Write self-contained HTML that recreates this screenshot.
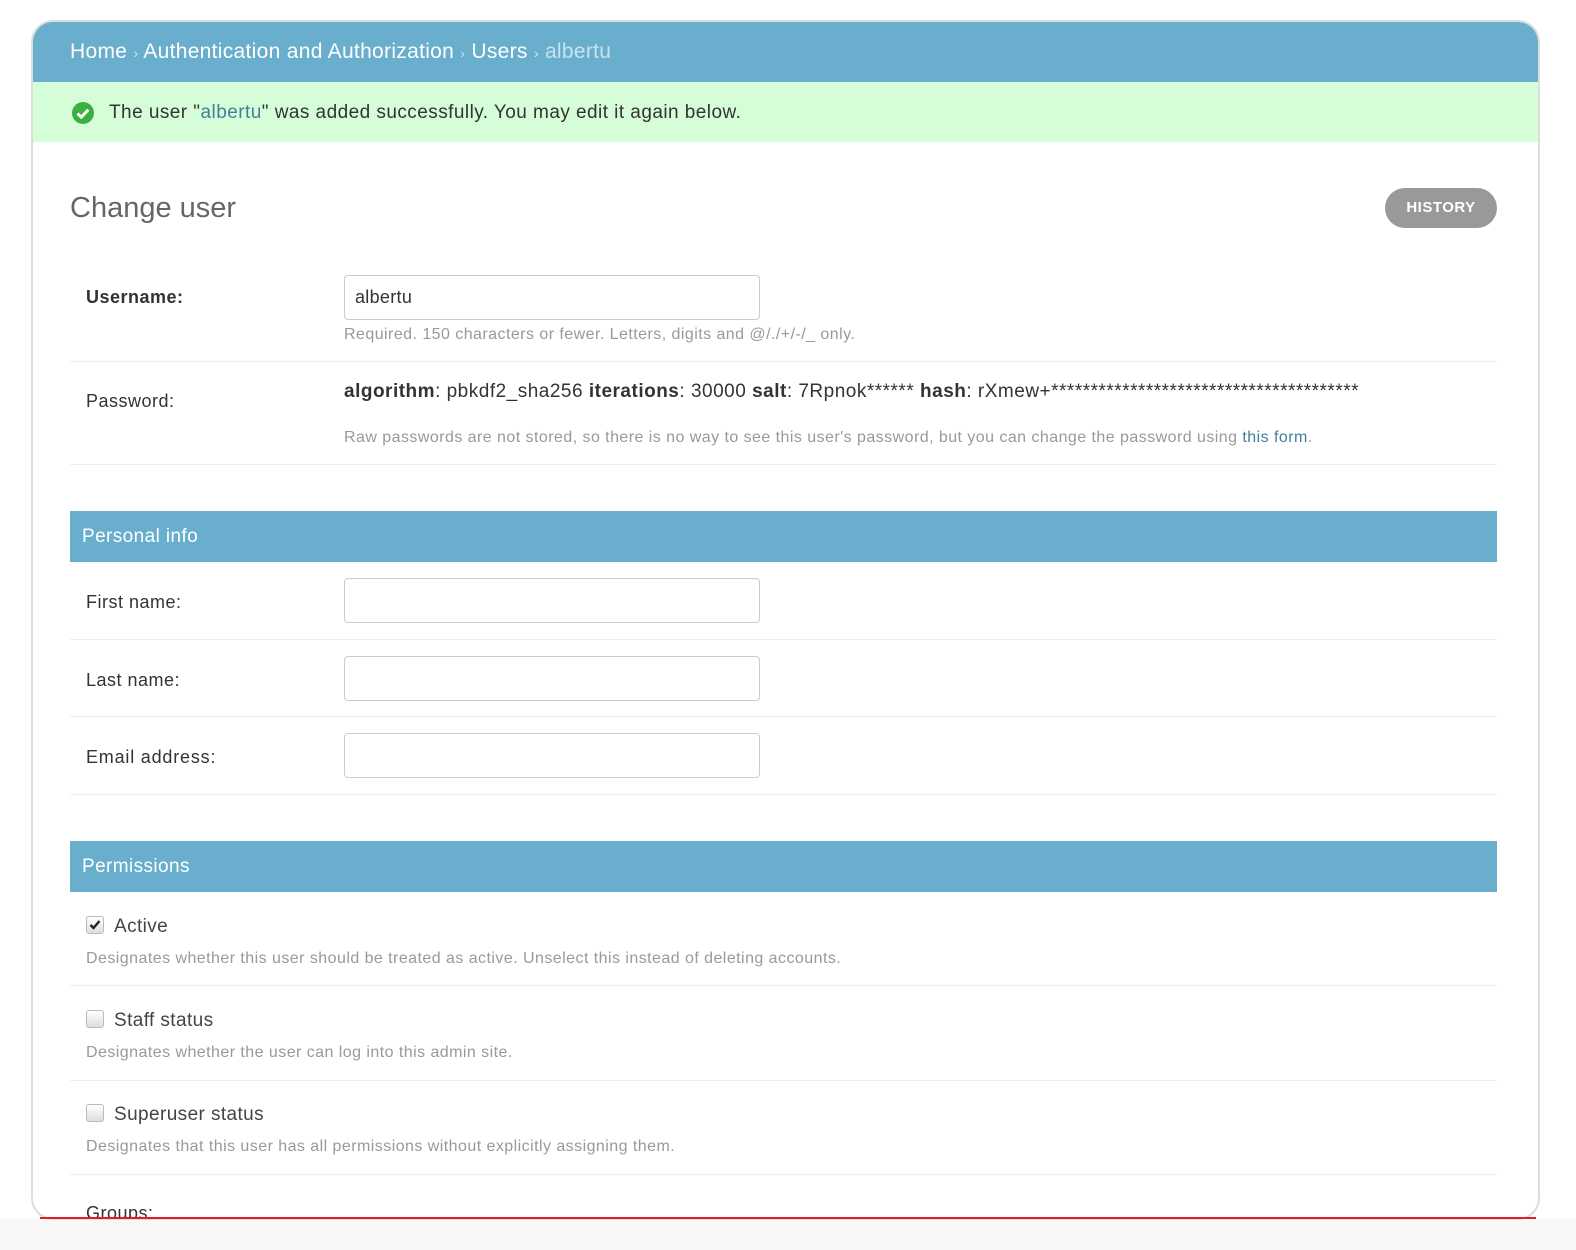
<!DOCTYPE html>
<html><head><meta charset="utf-8"><style>
*{box-sizing:border-box;margin:0;padding:0}
body{width:1576px;height:1250px;background:#fff;font-family:"Liberation Sans",Arial,sans-serif;position:relative;overflow:hidden;color:#333}
.bottom{position:absolute;left:0;top:1219px;width:1576px;height:31px;background:#f8f8f8}
.frame{position:absolute;left:31px;top:20px;width:1509px;height:1200px;border:2px solid #ddd;border-radius:22px;overflow:hidden;background:#fff}
.red{position:absolute;left:40px;top:1217px;width:1496px;height:2px;background:#e02020}
.a{position:absolute;white-space:nowrap}
.bc{left:0;top:0;width:1509px;height:60px;background:#69afcd;color:#fff;font-size:21px;padding:18px 0 0 37px;letter-spacing:0.3px}
.bc .s{font-size:14px;color:#cde6f1}
.bc .c{color:#c9e3ee}
.msg{left:0;top:60px;width:1509px;height:60px;background:#d5fdd8;font-size:19px;padding:20px 0 0 76px;color:#333;letter-spacing:0.45px}
.msg a{color:#447e9b;text-decoration:none}
.h1{left:37px;top:170px;font-size:29px;color:#666;font-weight:300;letter-spacing:0px}
.hist{left:1352px;top:166px;width:112px;height:40px;border-radius:20px;background:#999;color:#fff;font-weight:bold;font-size:15px;text-align:center;line-height:40px;letter-spacing:0.5px}
.lbl{font-size:18px;color:#333;left:53px;letter-spacing:0.5px}
.inp{left:311px;width:416px;height:45px;border:1px solid #ccc;border-radius:4px;font-size:18px;padding:11px 10px;color:#333;letter-spacing:0.3px}
.help{font-size:16px;color:#999;letter-spacing:0.45px}
.sep{left:37px;width:1427px;height:1px;background:#eee}
.sec{left:37px;width:1427px;height:51px;background:#69afcd;color:#fff;font-size:19px;padding:15px 0 0 12px;letter-spacing:0.4px}
.cb{left:53px;width:18px;height:18px;border:1px solid #bbb;border-radius:3px;background:linear-gradient(#fff,#ddd)}
.cbl{left:81px;font-size:19px;color:#444;letter-spacing:0.4px}
</style></head><body>
<div class="bottom"></div>
<div class="frame">
 <div class="a bc">Home <span class="s">›</span> Authentication and Authorization <span class="s">›</span> Users <span class="s">›</span> <span class="c">albertu</span></div>
 <div class="a msg">The user "<a>albertu</a>" was added successfully. You may edit it again below.</div>
 <svg class="a" style="left:38px;top:79px" width="24" height="24" viewBox="0 0 24 24"><circle cx="12" cy="12" r="11" fill="#3ab03e"/><path d="M6.5 12.5l3.8 3.6 7-7.4" stroke="#fff" stroke-width="3" fill="none"/></svg>
 <div class="a h1">Change user</div>
 <div class="a hist">HISTORY</div>

 <div class="a lbl" style="top:265px;font-weight:bold">Username:</div>
 <div class="a inp" style="top:253px">albertu</div>
 <div class="a help" style="left:311px;top:304px">Required. 150 characters or fewer. Letters, digits and @/./+/-/_ only.</div>
 <div class="a sep" style="top:339px"></div>

 <div class="a lbl" style="top:369px">Password:</div>
 <div class="a" style="left:311px;top:359px;font-size:19px;letter-spacing:0.5px"><b>algorithm</b>: pbkdf2_sha256 <b>iterations</b>: 30000 <b>salt</b>: 7Rpnok****** <b>hash</b>: rXmew+***************************************</div>
 <div class="a help" style="left:311px;top:407px">Raw passwords are not stored, so there is no way to see this user's password, but you can change the password using <span style="color:#447e9b">this form</span>.</div>
 <div class="a sep" style="top:442px"></div>

 <div class="a sec" style="top:489px">Personal info</div>
 <div class="a lbl" style="top:570px">First name:</div>
 <div class="a inp" style="top:556px"></div>
 <div class="a sep" style="top:617px"></div>
 <div class="a lbl" style="top:648px">Last name:</div>
 <div class="a inp" style="top:634px"></div>
 <div class="a sep" style="top:694px"></div>
 <div class="a lbl" style="top:725px;letter-spacing:0.8px">Email address:</div>
 <div class="a inp" style="top:711px"></div>
 <div class="a sep" style="top:772px"></div>

 <div class="a sec" style="top:819px">Permissions</div>
 <div class="a cb" style="top:894px"><svg width="16" height="16" viewBox="0 0 16 16" style="position:absolute;left:0;top:0"><path d="M3.5 8l3 3 6-7" stroke="#222" stroke-width="2.4" fill="none"/></svg></div>
 <div class="a cbl" style="top:894px">Active</div>
 <div class="a help" style="left:53px;top:928px">Designates whether this user should be treated as active. Unselect this instead of deleting accounts.</div>
 <div class="a sep" style="top:963px"></div>
 <div class="a cb" style="top:988px"></div>
 <div class="a cbl" style="top:988px">Staff status</div>
 <div class="a help" style="left:53px;top:1022px">Designates whether the user can log into this admin site.</div>
 <div class="a sep" style="top:1058px"></div>
 <div class="a cb" style="top:1082px"></div>
 <div class="a cbl" style="top:1082px">Superuser status</div>
 <div class="a help" style="left:53px;top:1116px">Designates that this user has all permissions without explicitly assigning them.</div>
 <div class="a sep" style="top:1152px"></div>
 <div class="a lbl" style="top:1181px">Groups:</div>
</div>
<div class="red"></div>
</body></html>
